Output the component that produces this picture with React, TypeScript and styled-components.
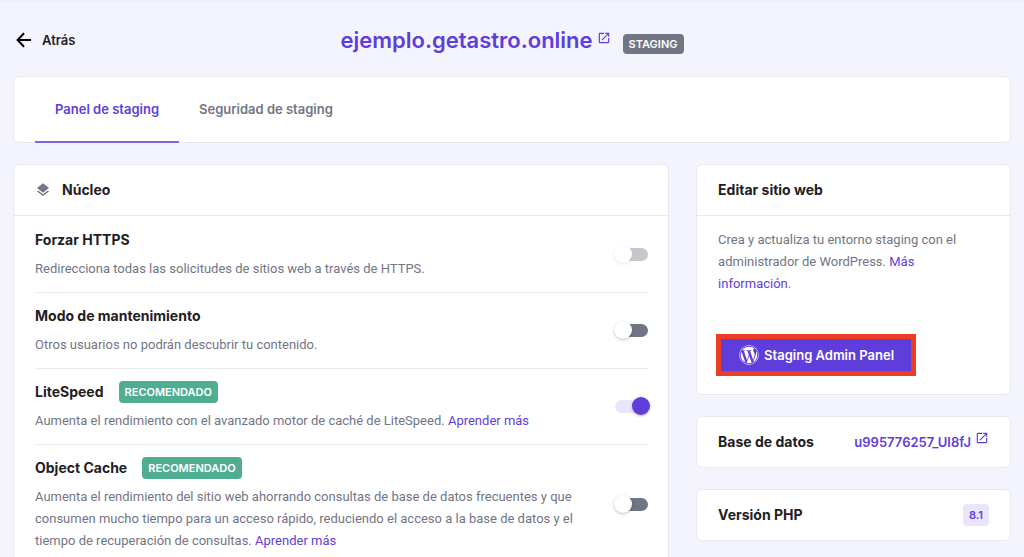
import React from "react";
import styled, { createGlobalStyle } from "styled-components";
import { MdLayers, MdOpenInNew } from "react-icons/md";
import { FaWordpress } from "react-icons/fa";

const color = {
  page: "#f4f4ff",
  card: "#ffffff",
  line: "#e8e9f1",
  ink: "#1f2024",
  muted: "#727586",
  brand: "#5f3ddb",
  brandSoft: "#ebe4ff",
  success: "#4fad92",
  alert: "#ec3d25",
};

const GlobalStyle = createGlobalStyle`
  *, *::before, *::after { box-sizing: border-box; }
  body {
    margin: 0;
    background: ${color.page};
    color: ${color.ink};
    font-family: Inter, "Liberation Sans", sans-serif;
    font-size: 13px;
    line-height: 22px;
  }
  h1, h2, p, ul { margin: 0; padding: 0; }
  ul { list-style: none; }
  a { color: ${color.brand}; text-decoration: none; }
  button { font: inherit; border: 0; cursor: pointer; }
  svg { display: block; flex: none; }
`;

const Page = styled.div`
  border-top: 2px solid #eeeef8;
  padding: 0 13px 24px;
`;

const TopBar = styled.header`
  display: grid;
  grid-template-columns: 1fr auto 1fr;
  align-items: center;
  height: 74px;
  padding-top: 2px;
`;

const BackLink = styled.a`
  display: flex;
  align-items: center;
  justify-self: start;
  gap: 10px;
  padding-left: 3px;
  color: ${color.ink};
  font-weight: 600;
`;

const Site = styled.div`
  display: flex;
  align-items: center;
  gap: 12px;
`;

const SiteTitle = styled.h1`
  font-size: 22px;
  line-height: 28px;
`;

const ExternalLink = styled.a`
  display: flex;
  align-items: flex-start;
  gap: 4px;
  font-weight: 600;
`;

const TitleLink = styled(ExternalLink)`
  svg {
    margin-top: 5px;
  }
`;

const Badge = styled.span<{ $tone: "neutral" | "success" | "brand" }>`
  padding: 0 6px;
  border-radius: 4px;
  font-size: 11px;
  font-weight: 600;
  color: ${(p) => (p.$tone === "brand" ? color.brand : "#ffffff")};
  background: ${(p) =>
    ({ neutral: color.muted, success: color.success, brand: color.brandSoft })[p.$tone]};
`;

const StatusBadge = styled(Badge)`
  align-self: flex-end;
  line-height: 20px;
`;

const Card = styled.section`
  background: ${color.card};
  border: 1px solid ${color.line};
  border-radius: 6px;
`;

const Tabs = styled.nav`
  display: flex;
  height: 67px;
  padding: 0 21px;
  background: ${color.card};
  border: 1px solid ${color.line};
  border-radius: 6px;
`;

const Tab = styled.button<{ $active?: boolean }>`
  margin-bottom: -1px;
  padding: 0 20px;
  background: none;
  font-weight: 600;
  color: ${(p) => (p.$active ? color.brand : color.muted)};
  border-bottom: 2px solid ${(p) => (p.$active ? "#7f66e3" : "transparent")};
`;

const Columns = styled.main`
  display: grid;
  grid-template-columns: 25fr 12fr;
  align-items: start;
  gap: 27px;
  margin-top: 21px;
`;

const Side = styled.aside`
  display: grid;
  gap: 21px;
`;

const CardHeader = styled.div<{ $divided?: boolean }>`
  display: flex;
  align-items: center;
  gap: 11px;
  height: ${(p) => (p.$divided ? 51 : 50)}px;
  padding: 0 21px;
  border-bottom: ${(p) => (p.$divided ? `1px solid ${color.line}` : "0")};
  color: ${color.muted};
`;

const CardTitle = styled.h2`
  flex: 1;
  font-size: 14px;
  font-weight: 700;
  color: ${color.ink};
`;

const Options = styled.ul`
  padding: 0 20px 12px 21px;
`;

const Option = styled.li`
  display: flex;
  align-items: center;
  justify-content: space-between;
  gap: 24px;
  padding: 13px 0 12px;

  & + & {
    padding-top: 12px;
    border-top: 1px solid ${color.line};
  }
`;

const OptionHead = styled.div`
  display: flex;
  align-items: center;
  gap: 15px;
  margin-bottom: 7px;
`;

const OptionTitle = styled.label`
  font-size: 14px;
  font-weight: 700;
`;

const Text = styled.p`
  font-family: Roboto, "Liberation Sans", sans-serif;
  color: ${color.muted};
`;

const Switch = styled.input`
  position: relative;
  flex: none;
  appearance: none;
  width: 33px;
  height: 13px;
  margin: 0;
  border-radius: 7px;
  background: ${color.muted};

  &::before {
    content: "";
    position: absolute;
    top: -3px;
    left: -1px;
    width: 18px;
    height: 18px;
    border-radius: 50%;
    background: #ffffff;
    box-shadow: 0 1px 3px rgba(0, 0, 0, 0.25);
  }
  &:checked {
    background: ${color.brandSoft};
  }
  &:checked::before {
    left: 17px;
    background: ${color.brand};
  }
  &:disabled {
    opacity: 0.4;
  }
`;

const EditBody = styled.div`
  padding: 13px 21px 20px;

  ${Text} {
    max-width: 250px;
    margin-bottom: 41px;
  }
`;

const AdminButton = styled.button`
  display: flex;
  align-items: center;
  gap: 5px;
  height: 38px;
  padding: 0 20px 0 21px;
  color: #ffffff;
  font-weight: 600;
  background: ${color.brand};
  outline: 5px solid ${color.alert};
  outline-offset: -3px;
`;

type OptionData = {
  id: string;
  title: string;
  text: string;
  recommended?: boolean;
  link?: boolean;
  on?: boolean;
  disabled?: boolean;
};

const options: OptionData[] = [
  {
    id: "https",
    title: "Forzar HTTPS",
    text: "Redirecciona todas las solicitudes de sitios web a través de HTTPS.",
    disabled: true,
  },
  {
    id: "maintenance",
    title: "Modo de mantenimiento",
    text: "Otros usuarios no podrán descubrir tu contenido.",
  },
  {
    id: "litespeed",
    title: "LiteSpeed",
    text: "Aumenta el rendimiento con el avanzado motor de caché de LiteSpeed.",
    recommended: true,
    link: true,
    on: true,
  },
  {
    id: "object-cache",
    title: "Object Cache",
    text: "Aumenta el rendimiento del sitio web ahorrando consultas de base de datos frecuentes y que consumen mucho tiempo para un acceso rápido, reduciendo el acceso a la base de datos y el tiempo de recuperación de consultas.",
    recommended: true,
    link: true,
  },
];

export default function App() {
  return (
    <>
      <GlobalStyle />
      <Page>
        <TopBar>
          <BackLink href="#">
            <svg width="16" height="16" viewBox="0 0 16 16" fill="none" stroke="#000" strokeWidth="2" aria-hidden="true">
              <path d="M15 8H2M8 1.2 1.6 8 8 14.8" />
            </svg>
            Atrás
          </BackLink>
          <Site>
            <SiteTitle>
              <TitleLink href="#">
                ejemplo.getastro.online
                <MdOpenInNew size={14} />
              </TitleLink>
            </SiteTitle>
            <StatusBadge $tone="neutral">STAGING</StatusBadge>
          </Site>
        </TopBar>

        <Tabs>
          <Tab $active>Panel de staging</Tab>
          <Tab>Seguridad de staging</Tab>
        </Tabs>

        <Columns>
          <Card>
            <CardHeader $divided>
              <MdLayers size={16} />
              <CardTitle>Núcleo</CardTitle>
            </CardHeader>
            <Options>
              {options.map((o) => (
                <Option key={o.id}>
                  <div>
                    <OptionHead>
                      <OptionTitle htmlFor={o.id}>{o.title}</OptionTitle>
                      {o.recommended && <Badge $tone="success">RECOMENDADO</Badge>}
                    </OptionHead>
                    <Text>
                      {o.text} {o.link && <a href="#">Aprender más</a>}
                    </Text>
                  </div>
                  <Switch id={o.id} type="checkbox" role="switch" defaultChecked={o.on} disabled={o.disabled} />
                </Option>
              ))}
            </Options>
          </Card>

          <Side>
            <Card>
              <CardHeader $divided>
                <CardTitle>Editar sitio web</CardTitle>
              </CardHeader>
              <EditBody>
                <Text>
                  Crea y actualiza tu entorno staging con el administrador de WordPress.{" "}
                  <a href="#">Más información</a>.
                </Text>
                <AdminButton>
                  <FaWordpress size={20} />
                  Staging Admin Panel
                </AdminButton>
              </EditBody>
            </Card>
            <Card>
              <CardHeader>
                <CardTitle>Base de datos</CardTitle>
                <ExternalLink href="#">
                  u995776257_UI8fJ
                  <MdOpenInNew size={14} />
                </ExternalLink>
              </CardHeader>
            </Card>
            <Card>
              <CardHeader>
                <CardTitle>Versión PHP</CardTitle>
                <Badge $tone="brand">8.1</Badge>
              </CardHeader>
            </Card>
          </Side>
        </Columns>
      </Page>
    </>
  );
}
